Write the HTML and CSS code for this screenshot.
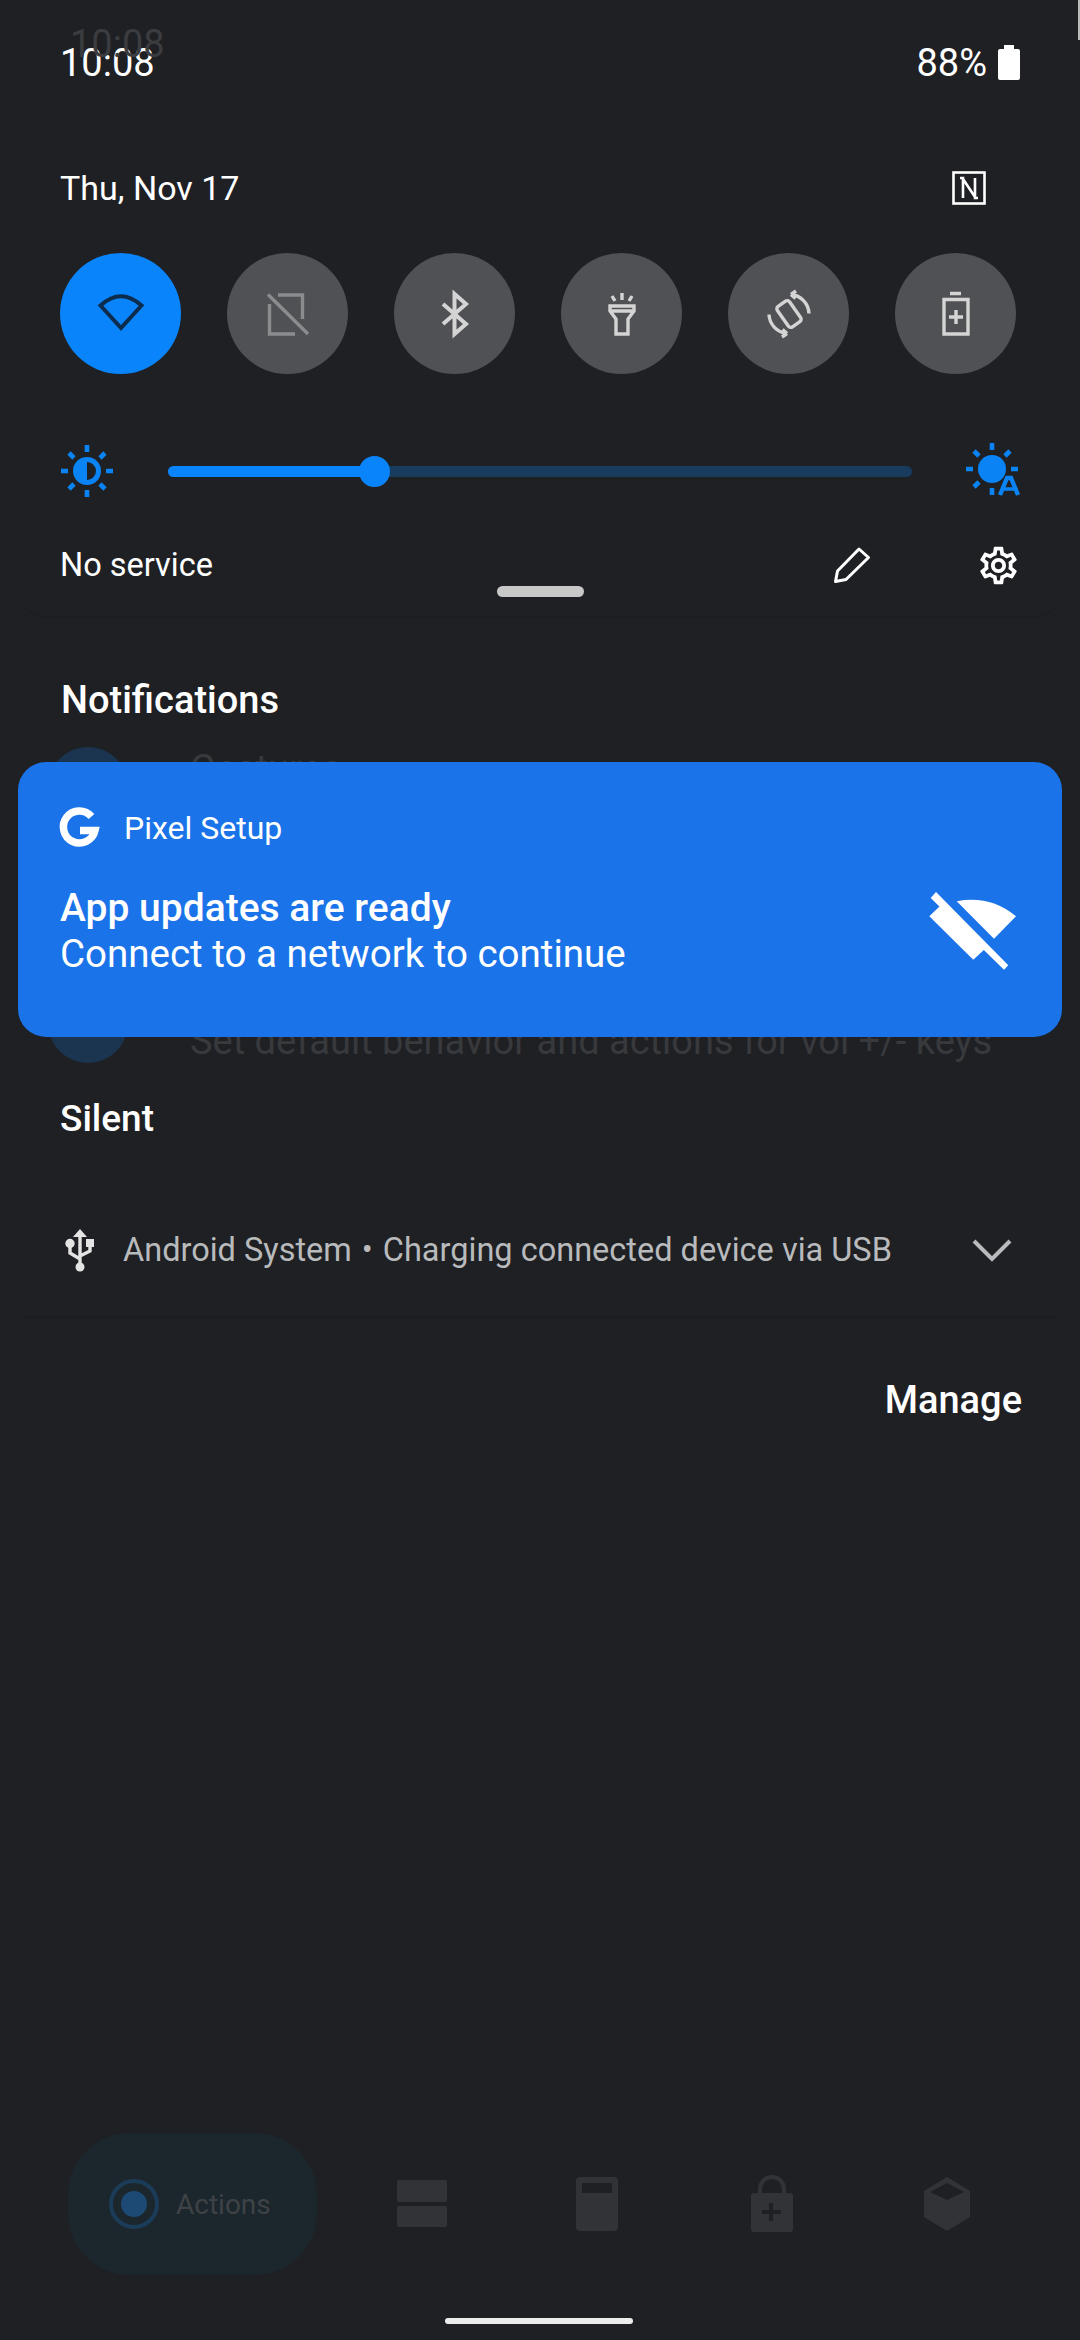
FILE: index.html
```html
<!DOCTYPE html>
<html lang="en">
<head>
    <meta charset="UTF-8">
    <title>Notification shade</title>
    <link rel="stylesheet" href="styles.css">
</head>
<body>
    <div class="edge-mark"></div>
    <div class="ghost-clock">10:08</div>

    <div class="status">
        <span class="clock">10:08</span>
        <div class="status-right">
            <span class="percent">88%</span>
            <svg class="battery" width="22" height="35" viewBox="0 0 22 35"><path fill="#fff" d="M6 0h10v4h4a2 2 0 0 1 2 2v27a2 2 0 0 1-2 2H2a2 2 0 0 1-2-2V6a2 2 0 0 1 2-2h4z"/></svg>
        </div>
    </div>

    <section class="qs">
        <div class="qs-top">
            <span class="date">Thu, Nov 17</span>
            <svg width="34" height="34" viewBox="0 0 34 34" fill="none" stroke="#fff" stroke-width="2.6"><rect x="1.5" y="1.5" width="31" height="31"/><path d="M8 7h3v20M26 27h-3V7M11 8l12 18"/></svg>
        </div>

        <div class="tiles">
            <div class="tile tile-on">
                <svg width="60" height="60" viewBox="0 0 60 60" fill="none" stroke="#0c2c4e" stroke-width="4"><path d="M30 44 9.500 21.500Q30 3 50.500 21.500z"/></svg>
            </div>
            <div class="tile">
                <svg width="60" height="60" viewBox="0 0 60 60" fill="none" stroke="#8b8c8e" stroke-width="3.400"><path d="M20 11h24.500v24M37 50H11.500V20M10 10.500l40 39.500"/></svg>
            </div>
            <div class="tile">
                <svg width="60" height="60" viewBox="0 0 60 60" fill="none" stroke="#d4d4d4" stroke-width="4"><path d="M18 20l23 20-11.500 10V10L41 20 18 40"/></svg>
            </div>
            <div class="tile">
                <svg width="60" height="60" viewBox="0 0 60 60" fill="none" stroke="#d4d4d4" stroke-width="3.400"><path d="M18 22h24v5l-6 8v15H24V35l-6-8zM18 27h24M30 9v7M20 12l3 5M40 12l-3 5"/></svg>
            </div>
            <div class="tile">
                <svg width="60" height="60" viewBox="0 0 60 60" fill="none" stroke="#d4d4d4" stroke-width="3.400"><rect x="22.500" y="17.500" width="15" height="25" rx="3" transform="rotate(-35 30 30)"/><path d="M32 10.500A20 20 0 0 1 50 29.500M28 49.500A20 20 0 0 1 10 30.500M32 10.500l5-3.500M32 10.500l4.500 4M28 49.500l-5 3.500M28 49.500l-4.500-4"/></svg>
            </div>
            <div class="tile">
                <svg width="60" height="60" viewBox="0 0 60 60" fill="none" stroke="#d4d4d4" stroke-width="3.400"><path d="M24 9.500h11M18 15.500h24v34.500H18zM30 26v14M23 33h14"/></svg>
            </div>
        </div>

        <div class="brightness">
            <svg width="56" height="56" viewBox="0 0 56 56"><g stroke="#0a84f5" stroke-width="4.600"><path d="M28 2v7M28 47v7M2 28h7M47 28h7M10 10l5 5M41 41l5 5M46 10l-5 5M15 41l-5 5"/></g><circle cx="28" cy="28" r="14" fill="#0a84f5"/><path d="M28 19a9 9 0 0 1 0 18z" fill="#1f2024"/></svg>
            <div class="track">
                <div class="track-fill"><span class="thumb"></span></div>
            </div>
            <svg class="auto-sun" width="56" height="56" viewBox="0 0 56 56"><g stroke="#0a84f5" stroke-width="4.600"><path d="M20 0v7M20 45v7M-6 26h7M39 26h7M2 8l5 5M38 8l-5 5M7 39l-5 5"/></g><circle cx="20" cy="26" r="14" fill="#0a84f5"/><path d="M28 52l7-17h4l7 17" fill="none" stroke="#0a84f5" stroke-width="4.400"/><path d="M31 46h12" stroke="#0a84f5" stroke-width="3.500"/></svg>
        </div>

        <div class="qs-foot">
            <span class="carrier">No service</span>
            <div class="foot-icons">
                <svg width="38" height="38" viewBox="0 0 38 38" fill="none" stroke="#fff" stroke-width="3" stroke-linejoin="round"><path d="M2.500 35.500l2-10.500L26 3l9.500 8.500L13 33.500z"/></svg>
                <svg width="45" height="45" viewBox="0 0 24 24" fill="#fff"><path d="M19.430 12.980c.04-.32.07-.64.07-.98 0-.34-.03-.66-.07-.98l2.110-1.650c.19-.15.24-.42.12-.64l-2-3.460c-.09-.16-.26-.25-.44-.25-.06 0-.12.01-.17.03l-2.490 1c-.52-.4-1.080-.73-1.690-.98l-.38-2.650C14.460 2.180 14.250 2 14 2h-4c-.25 0-.46.18-.49.42l-.38 2.650c-.61.25-1.170.59-1.690.98l-2.490-1c-.06-.02-.12-.03-.18-.03-.17 0-.34.09-.43.25l-2 3.460c-.13.22-.07.49.12.64l2.110 1.650c-.04.32-.07.65-.07.98 0 .33.03.66.07.98l-2.110 1.650c-.19.15-.24.42-.12.64l2 3.460c.09.16.26.25.44.25.06 0 .12-.01.17-.03l2.490-1c.52.4 1.080.73 1.690.98l.38 2.650c.03.24.24.42.49.42h4c.25 0 .46-.18.49-.42l.38-2.650c.61-.25 1.170-.59 1.690-.98l2.490 1c.06.02.12.03.18.03.17 0 .34-.09.43-.25l2-3.460c.12-.22.07-.49-.12-.64l-2.110-1.650zm-1.980-1.710c.04.31.05.52.05.73 0 .21-.02.43-.05.73l-.14 1.130.89.7 1.080.84-.7 1.210-1.270-.51-1.040-.42-.9.68c-.43.32-.84.56-1.250.73l-1.060.43-.16 1.130-.2 1.350h-1.400l-.19-1.350-.16-1.130-1.060-.43c-.43-.18-.83-.41-1.230-.71l-.91-.7-1.060.43-1.270.51-.7-1.210 1.080-.84.89-.7-.14-1.130c-.03-.31-.05-.54-.05-.74s.02-.43.05-.73l.14-1.130-.89-.7-1.080-.84.7-1.210 1.270.51 1.040.42.9-.68c.43-.32.84-.56 1.250-.73l1.060-.43.16-1.130.2-1.350h1.390l.19 1.350.16 1.130 1.060.43c.43.18.83.41 1.230.71l.91.7 1.060-.43 1.270-.51.7 1.210-1.070.85-.89.7.14 1.130zM12 8c-2.210 0-4 1.790-4 4s1.790 4 4 4 4-1.790 4-4-1.790-4-4-4zm0 6c-1.100 0-2-.9-2-2s.9-2 2-2 2 .9 2 2-.9 2-2 2z"/></svg>
            </div>
        </div>
        <div class="handle"></div>
    </section>

    <h2 class="section-title notif-title">Notifications</h2>

    <div class="ghost-list">
        <div class="ghost-row">
            <span class="ghost-dot"></span>
            <span class="ghost-text">Gestures</span>
        </div>
        <div class="ghost-row ghost-row-low">
            <span class="ghost-dot"></span>
            <span class="ghost-text">Set default behavior and actions for vol +/- keys</span>
        </div>
    </div>

    <h2 class="section-title silent-title">Silent</h2>

    <div class="silent-row">
        <svg width="32" height="44" viewBox="0 0 32 44" fill="none" stroke="#e4e4e4" stroke-width="3.400"><path d="M15 8v31M15 31l-10-6V16M15 28l10-5v-7"/><path d="M15 1l-7 8h14z" fill="#e4e4e4" stroke="none"/><circle cx="15" cy="39" r="4.500" fill="#e4e4e4" stroke="none"/><circle cx="5" cy="15.500" r="3" fill="#e4e4e4"/><rect x="21" y="11" width="8" height="8" fill="#e4e4e4" stroke="none"/></svg>
        <span class="silent-text">Android System<span class="sep">•</span>Charging connected device via USB</span>
        <svg class="chevron" width="40" height="24" viewBox="0 0 40 24" fill="none" stroke="#b9babc" stroke-width="4"><path d="M2 3l18 18L38 3"/></svg>
    </div>
    <div class="divider"></div>

    <div class="manage">Manage</div>

    <div class="heads-up">
        <div class="hu-app">
            <svg width="44" height="44" viewBox="0 0 44 44" fill="none" stroke="#fff" stroke-width="7.500"><path d="M33.500 10.500A16 16 0 1 0 37 24.500H22"/></svg>
            <span class="hu-name">Pixel Setup</span>
        </div>
        <div class="hu-body">
            <div class="hu-text">
                <div class="hu-title">App updates are ready</div>
                <div class="hu-sub">Connect to a network to continue</div>
            </div>
            <svg width="100" height="95" viewBox="0 0 100 95" fill="#fff"><path d="M16 9 10.700 15 84 86.700 88.300 82.300z"/><path d="M9.300 33.300 20 23 66 65 53.300 76.700z"/><path d="M36.700 18.300Q70 12 96 33.300L74 55.700z"/></svg>
        </div>
    </div>

    <div class="dock">
        <div class="actions-pill">
            <svg width="56" height="56" viewBox="0 0 56 56" fill="none"><circle cx="28" cy="28" r="23" stroke="#1b3c58" stroke-width="4"/><circle cx="28" cy="28" r="13" fill="#1c4a75"/></svg>
            <span class="actions-label">Actions</span>
        </div>
        <div class="dock-slot">
            <svg width="52" height="48" viewBox="0 0 52 48" fill="#323336"><rect x="1" y="0" width="50" height="22" rx="2"/><rect x="1" y="26" width="50" height="21" rx="2"/></svg>
        </div>
        <div class="dock-slot">
            <svg width="44" height="54" viewBox="0 0 44 54" fill="#323336"><path fill-rule="evenodd" d="M5 0h34a4 4 0 0 1 4 4v46a4 4 0 0 1-4 4H5a4 4 0 0 1-4-4V4a4 4 0 0 1 4-4zM7 6v10h30V6z"/></svg>
        </div>
        <div class="dock-slot">
            <svg width="44" height="56" viewBox="0 0 44 56" fill="#323336"><path d="M10 18V13a12 12 0 0 1 24 0v5" fill="none" stroke="#323336" stroke-width="4"/><path fill-rule="evenodd" d="M4 17h36a3 3 0 0 1 3 3v33a3 3 0 0 1-3 3H4a3 3 0 0 1-3-3V20a3 3 0 0 1 3-3zM19 27v7h-7v4h7v7h4v-7h8v-4h-8v-7z"/></svg>
        </div>
        <div class="dock-slot">
            <svg width="48" height="54" viewBox="0 0 48 54" fill="#323336"><path fill-rule="evenodd" d="M24 0l23 14v26L24 54 1 40V14zM24 6 7 15l17 8 17-8z"/></svg>
        </div>
    </div>

    <div class="home-bar"></div>
</body>
</html>
```

FILE: styles.css
```css
* {
    box-sizing: border-box;
}
body {
    position: relative;
    display: flex;
    flex-direction: column;
    width: 1080px;
    height: 2340px;
    margin: 0;
    overflow: hidden;
    background: #1f2024;
    color: #fff;
    font-family: Roboto, "Noto Sans", sans-serif;
}
svg {
    display: block;
    flex: none;
    overflow: visible;
}

/* status bar */
.status {
    display: flex;
    justify-content: space-between;
    align-items: center;
    height: 145px;
    padding: 0 60px 20px 60px;
}
.clock, .percent {
    font-size: 38px;
}
.status-right {
    display: flex;
    align-items: center;
    gap: 11px;
}
.ghost-clock {
    position: absolute;
    top: 22px;
    left: 70px;
    font-size: 38px;
    color: #3b3c3f;
}
.edge-mark {
    position: absolute;
    top: 0;
    right: 0;
    width: 2px;
    height: 40px;
    background: #bbb;
}

/* quick settings */
.qs {
    height: 473px;
    margin: 0 18px;
    padding: 20px 46px 0 42px;
    border-bottom: 2px solid #1c1d20;
    border-radius: 0 0 28px 28px;
}
.qs-top {
    display: flex;
    justify-content: space-between;
    align-items: center;
    height: 45px;
    padding-right: 30px;
}
.date {
    font-size: 34px;
}
.tiles {
    display: flex;
    justify-content: space-between;
    margin-top: 43px;
}
.tile {
    display: flex;
    justify-content: center;
    align-items: center;
    width: 121px;
    height: 121px;
    border-radius: 50%;
    background: #505154;
}
.tile-on {
    background: #0a84fb;
}
.brightness {
    display: flex;
    align-items: center;
    margin: 66px -12px 0 -1px;
    height: 62px;
}
.track {
    flex: 1;
    height: 11px;
    margin: 0 60px 0 53px;
    border-radius: 6px;
    background: #173c5e;
}
.track-fill {
    position: relative;
    width: 207px;
    height: 11px;
    border-radius: 6px;
    background: #0a84fb;
}
.thumb {
    position: absolute;
    top: -10px;
    right: -15px;
    width: 31px;
    height: 31px;
    border-radius: 50%;
    background: #0a84fb;
}
.qs-foot {
    display: flex;
    justify-content: space-between;
    align-items: center;
    height: 50px;
    margin-top: 38px;
}
.carrier {
    font-size: 32.500px;
}
.foot-icons {
    display: flex;
    align-items: center;
    gap: 105px;
    margin-right: -5px;
}
.handle {
    width: 87px;
    height: 11px;
    margin: -4px auto 0;
    border-radius: 6px;
    background: #c8c8c8;
    transform: translateX(2px);
}

/* notifications */
.section-title {
    margin: 0;
    font-weight: 500;
}
.notif-title {
    margin: 58px 0 0 61px;
    font-size: 38px;
    line-height: 48px;
}
.ghost-list {
    display: flex;
    flex-direction: column;
    justify-content: space-between;
    height: 316px;
    margin-top: 23px;
    padding-left: 48px;
}
.ghost-row {
    display: flex;
    gap: 62px;
}
.ghost-dot {
    width: 80px;
    height: 80px;
    border-radius: 50%;
    background: #1b3550;
}
.ghost-text {
    font-size: 38px;
    color: #38393c;
}
.ghost-row-low .ghost-text {
    padding-top: 36px;
}
.heads-up {
    position: absolute;
    top: 762px;
    left: 18px;
    width: 1044px;
    height: 275px;
    padding: 44px 42px 0 40px;
    border-radius: 28px;
    background: #1a73e8;
}
.hu-app {
    display: flex;
    align-items: center;
    gap: 22px;
}
.hu-name {
    font-size: 32px;
}
.hu-body {
    display: flex;
    justify-content: space-between;
    align-items: center;
    margin-top: 33px;
    padding-left: 2px;
}
.hu-title {
    font-size: 39px;
    font-weight: 500;
    line-height: 46px;
}
.hu-sub {
    font-size: 38.500px;
    line-height: 46px;
}

/* silent section */
.silent-title {
    margin: 32px 0 0 60px;
    font-size: 37px;
    line-height: 48px;
}
.silent-row {
    display: flex;
    align-items: center;
    height: 50px;
    margin-top: 82px;
    padding: 0 68px 0 65px;
}
.silent-text {
    flex: 1;
    margin-left: 26px;
    font-size: 32.500px;
    color: #b9babc;
}
.sep {
    margin: 0 10px;
}
.divider {
    height: 2px;
    margin: 41px 22px 0;
    background: #1c1d20;
}
.manage {
    margin: 60px 58px 0 0;
    font-size: 38px;
    font-weight: 500;
    text-align: right;
}

/* dock */
.dock {
    display: flex;
    align-items: center;
    height: 142px;
    margin-top: auto;
    margin-bottom: 65px;
    padding-left: 68px;
}
.actions-pill {
    display: flex;
    align-items: center;
    gap: 14px;
    width: 249px;
    height: 142px;
    margin-right: 17px;
    padding-left: 38px;
    border-radius: 62px;
    background: #1c272d;
}
.actions-label {
    font-size: 28px;
    color: #3e4245;
}
.dock-slot {
    display: flex;
    justify-content: center;
    width: 175px;
}
.home-bar {
    position: absolute;
    left: 445px;
    bottom: 16px;
    width: 188px;
    height: 6px;
    border-radius: 3px;
    background: #ececec;
}
```
